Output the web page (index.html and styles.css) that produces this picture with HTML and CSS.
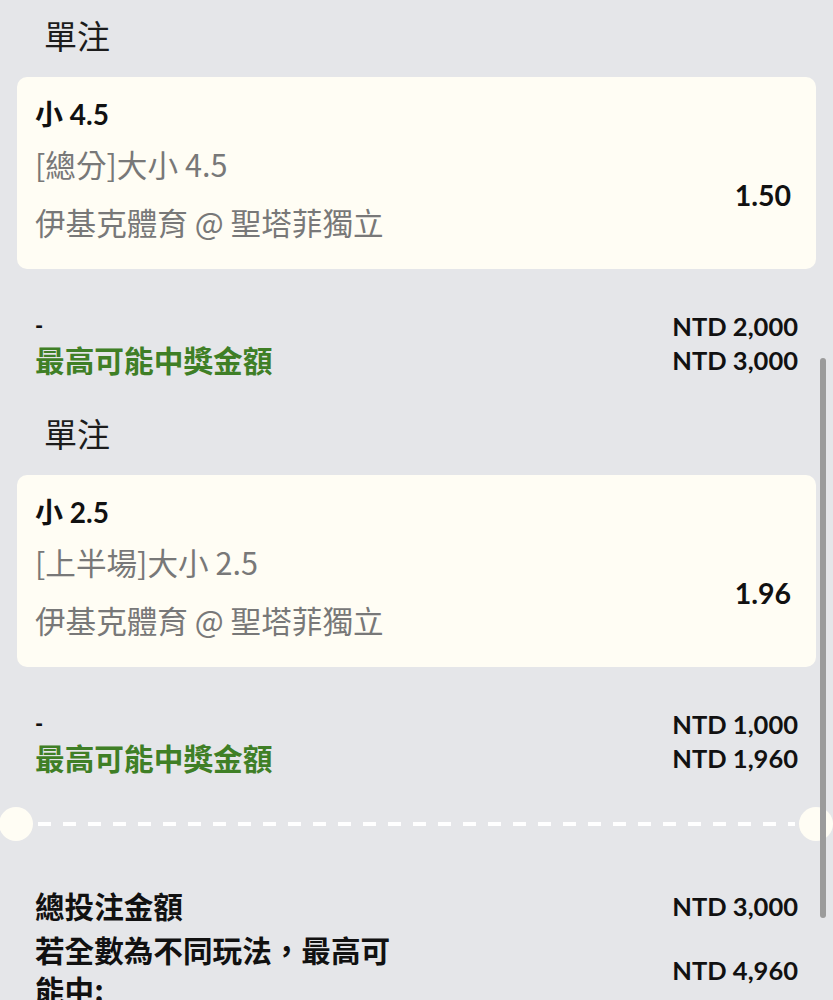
FILE: index.html
```html
<!DOCTYPE html>
<html lang="zh-Hant">
<head>
<meta charset="utf-8">
<title>單注</title>
<link rel="stylesheet" href="styles.css">
</head>
<body>
<div class="page">
  <section class="bet">
    <h2 class="bet-type">單注</h2>
    <div class="card">
      <div class="sel">小 4.5</div>
      <div class="card-row">
        <div class="info">
          <div class="market">[總分]大小 4.5</div>
          <div class="match">伊基克體育 @ 聖塔菲獨立</div>
        </div>
        <div class="odds">1.50</div>
      </div>
    </div>
    <div class="amounts">
      <div class="amt-row"><span class="dash">-</span><span class="val">NTD 2,000</span></div>
      <div class="amt-row"><span class="win">最高可能中獎金額</span><span class="val">NTD 3,000</span></div>
    </div>
  </section>

  <section class="bet second">
    <h2 class="bet-type">單注</h2>
    <div class="card">
      <div class="sel">小 2.5</div>
      <div class="card-row">
        <div class="info">
          <div class="market">[上半場]大小 2.5</div>
          <div class="match">伊基克體育 @ 聖塔菲獨立</div>
        </div>
        <div class="odds">1.96</div>
      </div>
    </div>
    <div class="amounts">
      <div class="amt-row"><span class="dash">-</span><span class="val">NTD 1,000</span></div>
      <div class="amt-row"><span class="win">最高可能中獎金額</span><span class="val">NTD 1,960</span></div>
    </div>
  </section>

  <div class="divider">
    <span class="hole"></span>
    <span class="dashes"></span>
    <span class="hole"></span>
  </div>

  <div class="summary">
    <div class="sum-row">
      <span class="sum-label">總投注金額</span>
      <span class="val">NTD 3,000</span>
    </div>
    <div class="sum-row two">
      <span class="sum-label wrap">若全數為不同玩法，最高可能中:</span>
      <span class="val">NTD 4,960</span>
    </div>
  </div>

  <div class="scrollbar"></div>
</div>
</body>
</html>
```

FILE: styles.css
```css
html, body {
  margin: 0;
  padding: 0;
  overflow: hidden;
  background: #e5e6e9;
}

body {
  font-family: "Lato", "Noto Sans CJK TC", sans-serif;
  color: #111;
}

.page {
  position: relative;
  width: 833px;
  min-height: 1000px;
}

.bet {
  display: flex;
  flex-direction: column;
}

.bet-type {
  margin: 15px 0 0;
  padding-left: 44px;
  font-family: "Noto Sans CJK TC", sans-serif;
  font-weight: 400;
  font-size: 33px;
  line-height: 40px;
  color: #1c1c1c;
}

.bet.second .bet-type {
  margin-top: 36px;
}

.card {
  margin: 22px 17px 0;
  background: #fffdf4;
  border-radius: 10px;
  padding: 20px 25px 27px 18px;
}

.sel {
  font-weight: 700;
  font-size: 28px;
  line-height: 34px;
  color: #111;
}

.card-row {
  margin-top: 13px;
  display: flex;
  align-items: center;
  justify-content: space-between;
}

.market,
.match {
  font-family: "Noto Sans CJK TC", sans-serif;
  font-size: 30.6px;
  line-height: 40px;
  color: #787878;
}

.match {
  margin-top: 18px;
}

.odds {
  font-weight: 700;
  font-size: 28.5px;
  color: #111;
  padding-top: 4px;
}

.amounts {
  margin-top: 40px;
  padding: 0 35px;
}

.amt-row {
  display: flex;
  justify-content: space-between;
  align-items: center;
  height: 34px;
}

.dash {
  font-weight: 900;
  font-size: 22px;
  line-height: 26px;
  color: #111;
}

.win {
  font-family: "Noto Sans CJK TC", sans-serif;
  font-weight: 700;
  font-size: 29.7px;
  line-height: 34px;
  color: #3f7f26;
}

.val {
  font-weight: 700;
  font-size: 25.5px;
  line-height: 34px;
  color: #111;
}

.divider {
  margin-top: 32px;
  display: flex;
  align-items: center;
  height: 34px;
}

.hole {
  flex: none;
  width: 34px;
  height: 34px;
  border-radius: 50%;
  background: #fffdf4;
}

.hole:first-child {
  margin-left: -1px;
}

.dashes {
  flex: 1;
  height: 4px;
  margin: 0 4px 0 5px;
  background: repeating-linear-gradient(to right, #ffffff 0 13px, transparent 13px 25px);
}

.summary {
  margin-top: 45px;
  padding: 0 35px;
}

.sum-row {
  display: flex;
  justify-content: space-between;
  align-items: center;
}

.sum-row.two {
  margin-top: 4px;
}

.sum-label {
  font-family: "Noto Sans CJK TC", sans-serif;
  font-weight: 700;
  font-size: 29.6px;
  line-height: 40px;
  color: #111;
}

.sum-label.wrap {
  width: 372px;
}

.scrollbar {
  position: absolute;
  left: 820px;
  top: 358px;
  width: 6px;
  height: 560px;
  border-radius: 3px;
  background: #9b9b9b;
}
```
